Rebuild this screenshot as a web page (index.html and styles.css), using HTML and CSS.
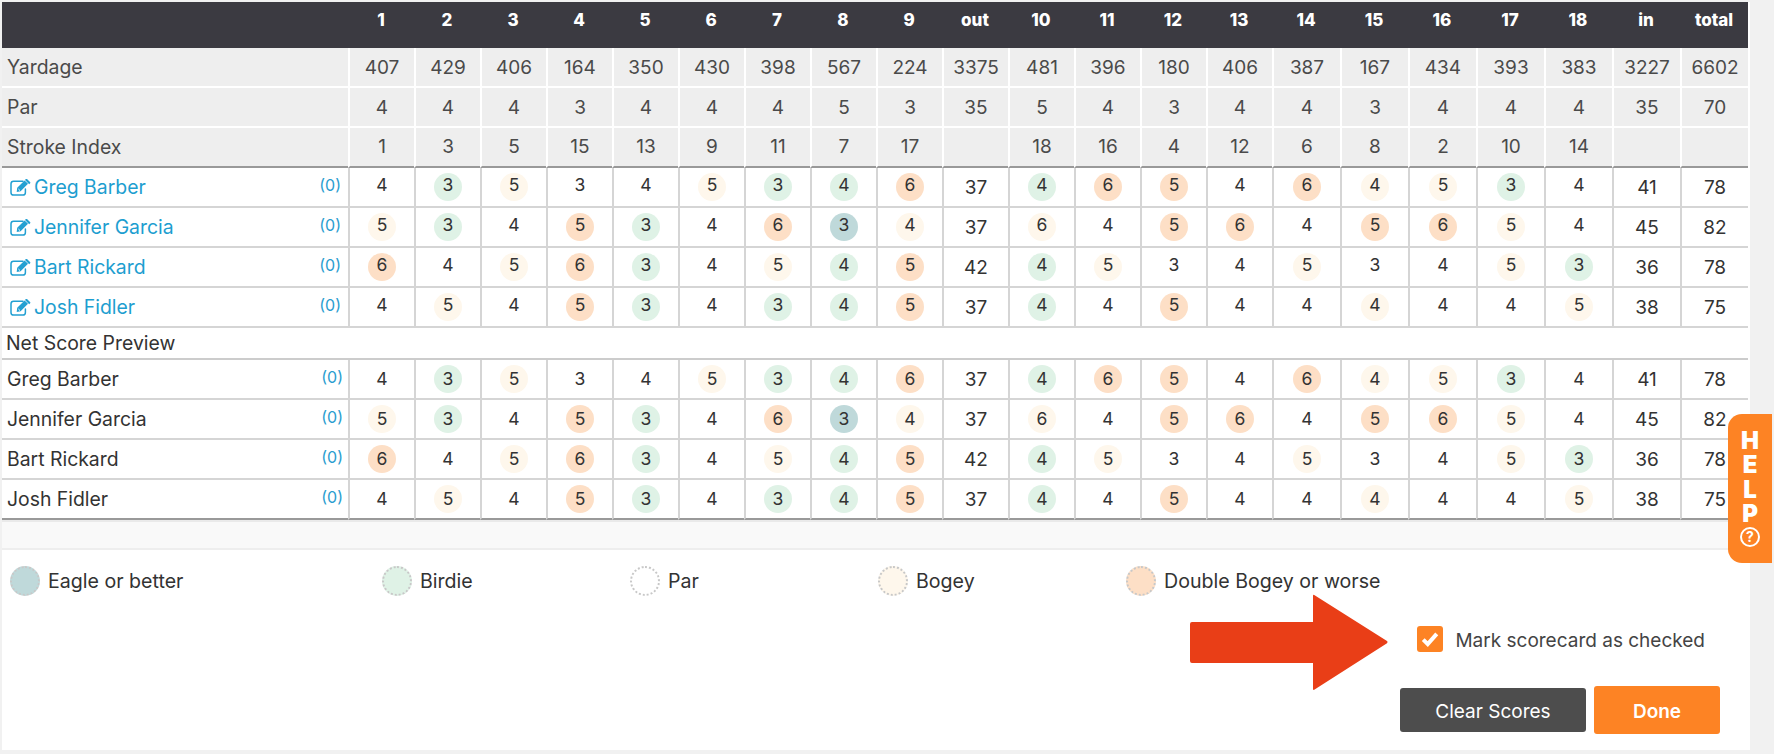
FILE: index.html
```html
<!DOCTYPE html>
<html lang="en">
<head>
<meta charset="utf-8">
<title>Scorecard</title>
<link rel="stylesheet" href="styles.css">
</head>
<body>
<svg class="defs" width="0" height="0" aria-hidden="true">
  <symbol id="edit" viewBox="0 0 21 17">
    <path d="M13 2.2H3.6C2 2.2 1 3.2 1 4.8v8.6C1 15 2 16 3.6 16h9.2c1.6 0 2.6-1 2.6-2.6V10" fill="none" stroke="currentColor" stroke-width="1.5" stroke-linecap="round"/>
    <path d="M7.2 8.8 14.6 1.4l3.4 3.4-7.4 7.4-3.9.7.5-4.1z" fill="currentColor"/>
    <path d="M15.8 0 17 0 20.3 3.2 20.3 4 19.2 5.2 15 1z" fill="currentColor"/>
    <path d="M8.4 10l1.6 1.6" stroke="#fff" stroke-width="1" fill="none"/>
  </symbol>
</svg>
<main class="card">
  <table class="score">
    <colgroup>
      <col class="c-name">
      <col span="14" class="c-a">
      <col span="7" class="c-b">
    </colgroup>
    <thead>
      <tr class="head"><th></th><th>1</th><th>2</th><th>3</th><th>4</th><th>5</th><th>6</th><th>7</th><th>8</th><th>9</th><th>out</th><th>10</th><th>11</th><th>12</th><th>13</th><th>14</th><th>15</th><th>16</th><th>17</th><th>18</th><th>in</th><th>total</th></tr>
    </thead>
    <tbody>
      <tr class="info"><td class="name">Yardage</td><td>407</td><td>429</td><td>406</td><td>164</td><td>350</td><td>430</td><td>398</td><td>567</td><td>224</td><td>3375</td><td>481</td><td>396</td><td>180</td><td>406</td><td>387</td><td>167</td><td>434</td><td>393</td><td>383</td><td>3227</td><td>6602</td></tr>
      <tr class="info"><td class="name">Par</td><td>4</td><td>4</td><td>4</td><td>3</td><td>4</td><td>4</td><td>4</td><td>5</td><td>3</td><td>35</td><td>5</td><td>4</td><td>3</td><td>4</td><td>4</td><td>3</td><td>4</td><td>4</td><td>4</td><td>35</td><td>70</td></tr>
      <tr class="info last"><td class="name">Stroke Index</td><td>1</td><td>3</td><td>5</td><td>15</td><td>13</td><td>9</td><td>11</td><td>7</td><td>17</td><td></td><td>18</td><td>16</td><td>4</td><td>12</td><td>6</td><td>8</td><td>2</td><td>10</td><td>14</td><td></td><td></td></tr>

      <tr class="gross"><td class="name"><div class="who"><a class="player"><svg class="edit"><use href="#edit"/></svg>Greg Barber</a><span class="adj">(0)</span></div></td><td><i>4</i></td><td><i class="bi">3</i></td><td><i class="bo">5</i></td><td><i>3</i></td><td><i>4</i></td><td><i class="bo">5</i></td><td><i class="bi">3</i></td><td><i class="bi">4</i></td><td><i class="db">6</i></td><td class="sum">37</td><td><i class="bi">4</i></td><td><i class="db">6</i></td><td><i class="db">5</i></td><td><i>4</i></td><td><i class="db">6</i></td><td><i class="bo">4</i></td><td><i class="bo">5</i></td><td><i class="bi">3</i></td><td><i>4</i></td><td class="sum">41</td><td class="sum">78</td></tr>
      <tr class="gross"><td class="name"><div class="who"><a class="player"><svg class="edit"><use href="#edit"/></svg>Jennifer Garcia</a><span class="adj">(0)</span></div></td><td><i class="bo">5</i></td><td><i class="bi">3</i></td><td><i>4</i></td><td><i class="db">5</i></td><td><i class="bi">3</i></td><td><i>4</i></td><td><i class="db">6</i></td><td><i class="ea">3</i></td><td><i class="bo">4</i></td><td class="sum">37</td><td><i class="bo">6</i></td><td><i>4</i></td><td><i class="db">5</i></td><td><i class="db">6</i></td><td><i>4</i></td><td><i class="db">5</i></td><td><i class="db">6</i></td><td><i class="bo">5</i></td><td><i>4</i></td><td class="sum">45</td><td class="sum">82</td></tr>
      <tr class="gross"><td class="name"><div class="who"><a class="player"><svg class="edit"><use href="#edit"/></svg>Bart Rickard</a><span class="adj">(0)</span></div></td><td><i class="db">6</i></td><td><i>4</i></td><td><i class="bo">5</i></td><td><i class="db">6</i></td><td><i class="bi">3</i></td><td><i>4</i></td><td><i class="bo">5</i></td><td><i class="bi">4</i></td><td><i class="db">5</i></td><td class="sum">42</td><td><i class="bi">4</i></td><td><i class="bo">5</i></td><td><i>3</i></td><td><i>4</i></td><td><i class="bo">5</i></td><td><i>3</i></td><td><i>4</i></td><td><i class="bo">5</i></td><td><i class="bi">3</i></td><td class="sum">36</td><td class="sum">78</td></tr>
      <tr class="gross"><td class="name"><div class="who"><a class="player"><svg class="edit"><use href="#edit"/></svg>Josh Fidler</a><span class="adj">(0)</span></div></td><td><i>4</i></td><td><i class="bo">5</i></td><td><i>4</i></td><td><i class="db">5</i></td><td><i class="bi">3</i></td><td><i>4</i></td><td><i class="bi">3</i></td><td><i class="bi">4</i></td><td><i class="db">5</i></td><td class="sum">37</td><td><i class="bi">4</i></td><td><i>4</i></td><td><i class="db">5</i></td><td><i>4</i></td><td><i>4</i></td><td><i class="bo">4</i></td><td><i>4</i></td><td><i>4</i></td><td><i class="bo">5</i></td><td class="sum">38</td><td class="sum">75</td></tr>

      <tr class="preview"><td colspan="22">Net Score Preview</td></tr>

      <tr class="net"><td class="name"><div class="who"><span class="nn">Greg Barber</span><span class="adj">(0)</span></div></td><td><i>4</i></td><td><i class="bi">3</i></td><td><i class="bo">5</i></td><td><i>3</i></td><td><i>4</i></td><td><i class="bo">5</i></td><td><i class="bi">3</i></td><td><i class="bi">4</i></td><td><i class="db">6</i></td><td class="sum">37</td><td><i class="bi">4</i></td><td><i class="db">6</i></td><td><i class="db">5</i></td><td><i>4</i></td><td><i class="db">6</i></td><td><i class="bo">4</i></td><td><i class="bo">5</i></td><td><i class="bi">3</i></td><td><i>4</i></td><td class="sum">41</td><td class="sum">78</td></tr>
      <tr class="net"><td class="name"><div class="who"><span class="nn">Jennifer Garcia</span><span class="adj">(0)</span></div></td><td><i class="bo">5</i></td><td><i class="bi">3</i></td><td><i>4</i></td><td><i class="db">5</i></td><td><i class="bi">3</i></td><td><i>4</i></td><td><i class="db">6</i></td><td><i class="ea">3</i></td><td><i class="bo">4</i></td><td class="sum">37</td><td><i class="bo">6</i></td><td><i>4</i></td><td><i class="db">5</i></td><td><i class="db">6</i></td><td><i>4</i></td><td><i class="db">5</i></td><td><i class="db">6</i></td><td><i class="bo">5</i></td><td><i>4</i></td><td class="sum">45</td><td class="sum">82</td></tr>
      <tr class="net"><td class="name"><div class="who"><span class="nn">Bart Rickard</span><span class="adj">(0)</span></div></td><td><i class="db">6</i></td><td><i>4</i></td><td><i class="bo">5</i></td><td><i class="db">6</i></td><td><i class="bi">3</i></td><td><i>4</i></td><td><i class="bo">5</i></td><td><i class="bi">4</i></td><td><i class="db">5</i></td><td class="sum">42</td><td><i class="bi">4</i></td><td><i class="bo">5</i></td><td><i>3</i></td><td><i>4</i></td><td><i class="bo">5</i></td><td><i>3</i></td><td><i>4</i></td><td><i class="bo">5</i></td><td><i class="bi">3</i></td><td class="sum">36</td><td class="sum">78</td></tr>
      <tr class="net end"><td class="name"><div class="who"><span class="nn">Josh Fidler</span><span class="adj">(0)</span></div></td><td><i>4</i></td><td><i class="bo">5</i></td><td><i>4</i></td><td><i class="db">5</i></td><td><i class="bi">3</i></td><td><i>4</i></td><td><i class="bi">3</i></td><td><i class="bi">4</i></td><td><i class="db">5</i></td><td class="sum">37</td><td><i class="bi">4</i></td><td><i>4</i></td><td><i class="db">5</i></td><td><i>4</i></td><td><i>4</i></td><td><i class="bo">4</i></td><td><i>4</i></td><td><i>4</i></td><td><i class="bo">5</i></td><td class="sum">38</td><td class="sum">75</td></tr>
    </tbody>
  </table>

  <div class="strip"></div>

  <div class="legend">
    <div class="key k1"><span class="dot ea"></span>Eagle or better</div>
    <div class="key k2"><span class="dot bi"></span>Birdie</div>
    <div class="key k2"><span class="dot"></span>Par</div>
    <div class="key k2"><span class="dot bo"></span>Bogey</div>
    <div class="key"><span class="dot db"></span>Double Bogey or worse</div>
  </div>

  <label class="check">
    <span class="box"><svg viewBox="0 0 16 14" width="18" height="16"><path d="M2 7.5l4 4 8-9" fill="none" stroke="#fff" stroke-width="3.6"/></svg></span>
    <span class="check-text">Mark scorecard as checked</span>
  </label>

  <div class="actions">
    <button class="btn clear">Clear Scores</button>
    <button class="btn done">Done</button>
  </div>

  <svg class="arrow" width="198" height="97" viewBox="0 0 198 97"><path d="M2 28h121V2q0-2 2-.6l72 45.5q1 1.2 0 2.4l-72 46q-2 1.4-2-.6V69H2q-2 0-2-2V30q0-2 2-2z" fill="#e93e17"/></svg>
</main>

<aside class="help">
  <span>H</span><span>E</span><span>L</span><span>P</span>
  <span class="q">?</span>
</aside>
</body>
</html>
```
FILE: styles.css
```css
* { box-sizing: border-box; }
html, body { margin: 0; height: 100%; }
body {
  background: #f1f1f1;
  padding: 2px 0 0 2px;
  font-family: "Inter", "Liberation Sans", sans-serif;
  color: #333;
  overflow: hidden;
}
.defs { position: absolute; }
.card {
  position: relative;
  width: 1748px;
  height: 748px;
  background: #fff;
}

/* table */
.score {
  width: 1746px;
  table-layout: fixed;
  border-collapse: separate;
  border-spacing: 0;
}
.c-name { width: 346px; }
.c-a { width: 66px; }
.c-b { width: 68px; }

.head th {
  height: 46px;
  padding: 0;
  background: #3b3a41;
  color: #fff;
  font-size: 17px;
  font-weight: 800;
  line-height: 36px;
  vertical-align: top;
  text-align: center;
}

.score td {
  padding: 0;
  text-align: center;
  border-left: 2px solid #d5d5d5;
  border-bottom: 2px solid #d5d5d5;
  height: 40px;
}
.score td.name { border-left: 0; text-align: left; }

.info td {
  background: #eee;
  color: #4a4a4a;
  font-size: 19px;
  line-height: 37px;
  border-left-color: #fff;
  border-bottom-color: #fff;
}
.info .name { padding-left: 5px; font-size: 19.4px; }
.info.last td { border-bottom-color: #999; line-height: 36px; }

.who { display: flex; justify-content: space-between; align-items: center; }
.player {
  display: flex;
  align-items: center;
  color: #1d9ed0;
  font-size: 19.4px;
  padding-left: 8px;
}
.edit { width: 21px; height: 17px; margin-right: 3px; color: #23a0d2; }
.adj { font-size: 16px; color: #2a9dd0; position: relative; top: -2px; }
.gross .adj { margin-right: 7px; }
.net .adj { margin-right: 5px; }
.nn { font-size: 19.4px; padding-left: 5px; color: #333; }

.score i {
  display: inline-block;
  width: 28px;
  height: 28px;
  border-radius: 50%;
  font-style: normal;
  font-size: 17.5px;
  text-align: center;
  vertical-align: middle;
}
.gross i { line-height: 23px; }
.net i { line-height: 28px; }

.sum { font-size: 19px; }

.bi { background: #dff2e6; }
.bo { background: #fef7ec; }
.db { background: #fddfc6; }
.ea { background: #bfd9da; }

.score .preview td {
  height: 32px;
  border-left: 0;
  border-bottom-color: #ccc;
  text-align: left;
  padding-left: 4px;
  font-size: 19.4px;
  color: #333;
}
.net.end td { border-bottom-color: #999; }

.strip {
  height: 30px;
  width: 1746px;
  background: #f9f9f9;
  border-top: 2px solid #eaeaea;
  border-bottom: 2px solid #eee;
}

/* legend */
.legend { display: flex; padding: 16px 0 0 8px; }
.key {
  display: flex;
  align-items: center;
  gap: 8px;
  font-size: 19.6px;
  color: #333;
}
.k1 { width: 372px; }
.k2 { width: 248px; }
.dot {
  width: 30px;
  height: 30px;
  border-radius: 50%;
  border: 2px dotted #c8c8c8;
}

/* checked */
.check {
  display: flex;
  align-items: center;
  justify-content: flex-end;
  gap: 12px;
  margin: 30px 45px 0 0;
  font-size: 19px;
  color: #444;
}
.check-text { padding-top: 2px; }
.box {
  display: flex;
  align-items: center;
  justify-content: center;
  width: 26px;
  height: 26px;
  border-radius: 3px;
  background: #fd8324;
}

/* actions */
.actions {
  display: flex;
  justify-content: flex-end;
  align-items: center;
  gap: 8px;
  margin: 34px 30px 0 0;
}
.btn {
  border: 0;
  border-radius: 3px;
  padding: 2px 0 0;
  color: #fff;
  font-family: inherit;
  font-size: 19px;
}
.clear { width: 186px; height: 44px; background: #4d4d4d; }
.done { width: 126px; height: 48px; background: #fd8324; font-weight: 600; }

.arrow { position: absolute; left: 1188px; top: 592px; }

/* help tab */
.help {
  position: fixed;
  top: 414px;
  right: 2px;
  width: 44px;
  height: 149px;
  padding-top: 15px;
  display: flex;
  flex-direction: column;
  align-items: center;
  background: #fd8324;
  border-radius: 14px 0 0 14px;
  color: #fff;
  font-size: 24px;
  font-weight: 900;
  line-height: 24.4px;
}
.q {
  width: 20px;
  height: 20px;
  border: 2px solid #fff;
  border-radius: 50%;
  font-size: 14px;
  font-weight: 700;
  line-height: 16px;
  text-align: center;
}
```
